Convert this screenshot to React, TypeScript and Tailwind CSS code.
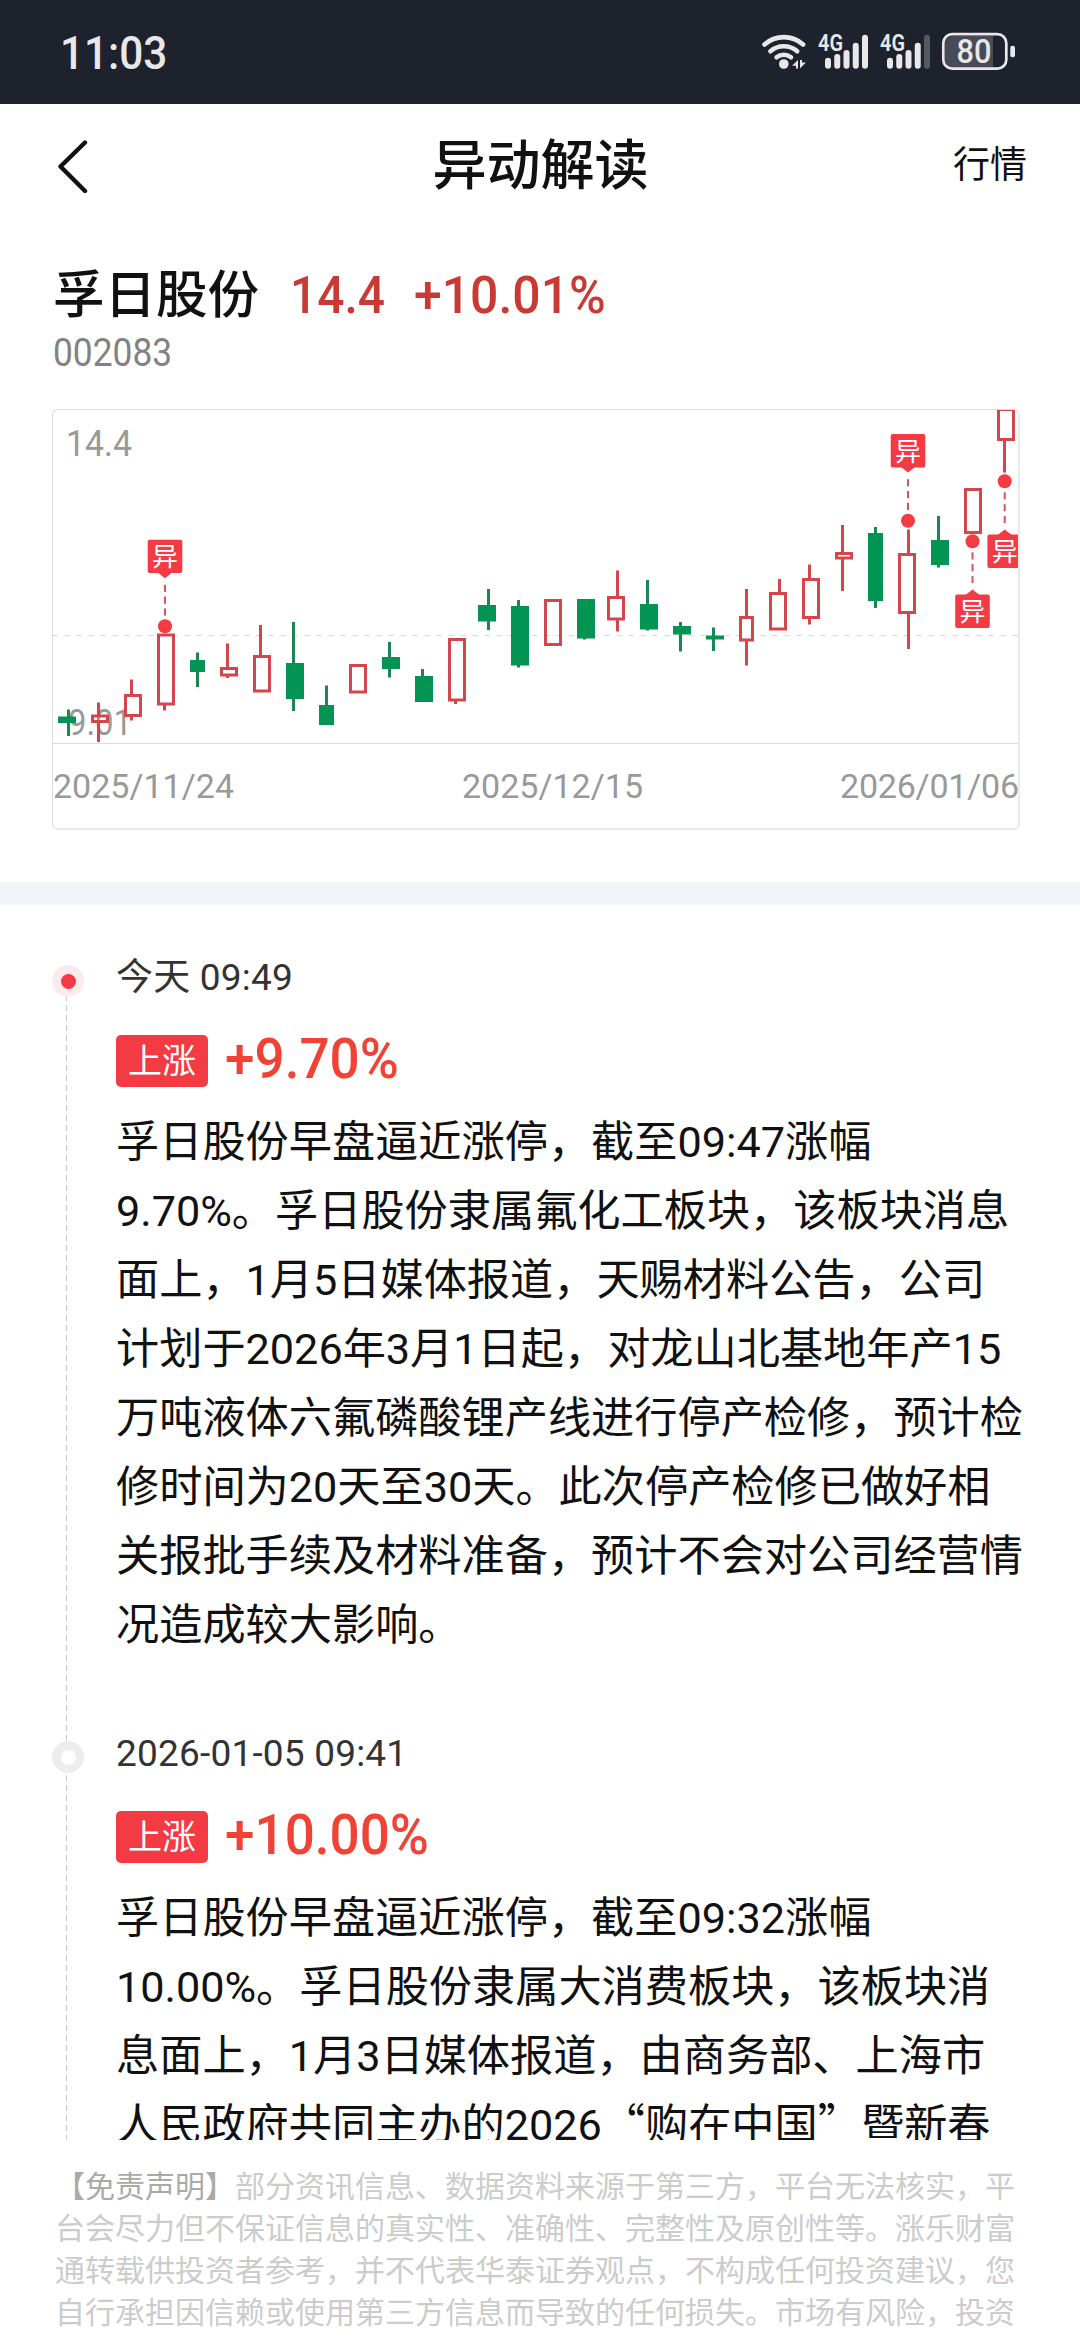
import clsx from "clsx";

type Candle = {
  up: boolean;
  x: number;
  w: number;
  top: number;
  bottom: number;
  wick?: number;
  high?: number;
  low?: number;
};

// x / w / top / bottom describe the body, wick is the left edge of the shadow line
const candles: Candle[] = [
  { up: false, x: 58, w: 18, top: 716.5, bottom: 723, wick: 67, high: 709.5, low: 736 },
  { up: true, x: 91, w: 18, top: 714.5, bottom: 723, wick: 97, high: 702.5, low: 742 },
  { up: true, x: 124, w: 18, top: 694, bottom: 717, wick: 130, high: 679.5, low: 720.5 },
  { up: true, x: 157, w: 18, top: 633.5, bottom: 705.5, wick: 163, high: 634, low: 710.5 },
  { up: false, x: 190, w: 15, top: 660, bottom: 672, wick: 196, high: 652.5, low: 687 },
  { up: true, x: 220, w: 18, top: 667, bottom: 676.5, wick: 226, high: 643.5, low: 678 },
  { up: true, x: 253, w: 18, top: 655, bottom: 692.5, wick: 259, high: 625, low: 692 },
  { up: false, x: 286, w: 18, top: 663, bottom: 699, wick: 292, high: 622, low: 711 },
  { up: false, x: 319, w: 15, top: 705, bottom: 725, wick: 325, high: 685.5, low: 725 },
  { up: true, x: 349, w: 18, top: 664, bottom: 693.5 },
  { up: false, x: 382, w: 18, top: 657, bottom: 669, wick: 388, high: 642, low: 677.5 },
  { up: false, x: 415, w: 18, top: 676, bottom: 702, wick: 421, high: 669, low: 702 },
  { up: true, x: 448, w: 18, top: 638, bottom: 701.5, wick: 454, high: 638, low: 704 },
  { up: false, x: 478, w: 18, top: 605, bottom: 621.5, wick: 487, high: 589, low: 630 },
  { up: false, x: 511, w: 18, top: 606, bottom: 665.5, wick: 517, high: 600, low: 667.5 },
  { up: true, x: 544, w: 18, top: 599, bottom: 646 },
  { up: false, x: 577, w: 18, top: 599, bottom: 638.5, wick: 583, high: 599, low: 639.5 },
  { up: true, x: 607, w: 18, top: 596, bottom: 620.5, wick: 616, high: 570.5, low: 631.5 },
  { up: false, x: 640, w: 18, top: 604, bottom: 629.5, wick: 646, high: 580, low: 630.5 },
  { up: false, x: 673, w: 18, top: 626, bottom: 634.5, wick: 679, high: 622, low: 651.5 },
  { up: false, x: 706, w: 18, top: 635.5, bottom: 639.5, wick: 712, high: 627.5, low: 651 },
  { up: true, x: 739, w: 15, top: 616, bottom: 641.5, wick: 745, high: 589, low: 665.5 },
  { up: true, x: 769, w: 18, top: 592, bottom: 630.5, wick: 778, high: 579, low: 630 },
  { up: true, x: 802, w: 18, top: 578, bottom: 619, wick: 808, high: 564.5, low: 624.5 },
  { up: true, x: 835, w: 18, top: 552, bottom: 559.5, wick: 841, high: 525, low: 591 },
  { up: false, x: 868, w: 15, top: 533, bottom: 601, wick: 874, high: 527, low: 608 },
  { up: true, x: 898, w: 18, top: 553, bottom: 614, wick: 907, high: 529.5, low: 649 },
  { up: false, x: 931, w: 18, top: 540, bottom: 565, wick: 937, high: 516, low: 567.5 },
  { up: true, x: 964, w: 18, top: 488, bottom: 534 },
  { up: true, x: 997, w: 18, top: 408, bottom: 441, wick: 1003, high: 410, low: 472.5 },
];

const markers = [
  { x: 165, y: 626.3, below: false },
  { x: 908, y: 520.7, below: false },
  { x: 972.5, y: 541.3, below: true },
  { x: 1004.7, y: 481.3, below: true },
];

const events = [
  {
    time: "今天 09:49",
    change: "+9.70%",
    latest: true,
    lines: [
      "孚日股份早盘逼近涨停，截至09:47涨幅",
      "9.70%。孚日股份隶属氟化工板块，该板块消息",
      "面上，1月5日媒体报道，天赐材料公告，公司",
      "计划于2026年3月1日起，对龙山北基地年产15",
      "万吨液体六氟磷酸锂产线进行停产检修，预计检",
      "修时间为20天至30天。此次停产检修已做好相",
      "关报批手续及材料准备，预计不会对公司经营情",
      "况造成较大影响。",
    ],
  },
  {
    time: "2026-01-05 09:41",
    change: "+10.00%",
    latest: false,
    lines: [
      "孚日股份早盘逼近涨停，截至09:32涨幅",
      "10.00%。孚日股份隶属大消费板块，该板块消",
      "息面上，1月3日媒体报道，由商务部、上海市",
      "人民政府共同主办的2026“购在中国”暨新春",
    ],
  },
];

const disclaimer = [
  "部分资讯信息、数据资料来源于第三方，平台无法核实，平",
  "台会尽力但不保证信息的真实性、准确性、完整性及原创性等。涨乐财富",
  "通转载供投资者参考，并不代表华泰证券观点，不构成任何投资建议，您",
  "自行承担因信赖或使用第三方信息而导致的任何损失。市场有风险，投资",
];

function Signal({ x, weak }: { x: number; weak?: boolean }) {
  const tops = [57.7, 54, 50, 42.7, 34.7];
  return (
    <g>
      <text x={x} y={51} fontSize={23} fontWeight={600} textLength={25} lengthAdjust="spacingAndGlyphs">
        4G
      </text>
      {tops.map((top, i) => (
        <rect
          key={top}
          x={x + 7 + i * 9.25}
          y={top}
          width={6}
          height={68.7 - top}
          rx={3}
          fill={weak && i === 4 ? "#555964" : "#e8e8ea"}
        />
      ))}
    </g>
  );
}

function StatusBar() {
  return (
    <div className="flex h-[104px] shrink-0 items-center justify-between bg-[#1e222d] pl-[60px] text-[#e8e8ea]">
      <span className="mt-0.5 origin-left scale-x-[.92] text-[46px] leading-none font-medium">11:03</span>
      <svg className="h-[104px] w-[330px]" viewBox="750 0 330 104" fill="#e8e8ea">
        <g fill="none" stroke="#e8e8ea" strokeWidth={4.6} strokeLinecap="round">
          <path d="M764.5 44.5a29 29 0 0 1 38.6 0" />
          <path d="M770.4 51.2a20.5 20.5 0 0 1 26.8 0" />
          <path d="M776.6 57.3a11.5 11.5 0 0 1 14.4 0" />
        </g>
        <circle cx={783.8} cy={64} r={4.8} />
        <path d="M792 65.8l6-5.8v8.4h-2v-2.6zM805.8 62.4l-5.800 6V60h2v2.4z" />
        <Signal x={818} />
        <Signal x={880} weak />
        <path d="M953 36h40v32h-40a8 8 0 0 1-8-8V44a8 8 0 0 1 8-8z" fill="#484b55" />
        <rect x={943.3} y={34.1} width={63} height={34.6} rx={9} fill="none" stroke="#e8e8ea" strokeWidth={2.7} />
        <rect x={1010.3} y={45.7} width={4.7} height={11.6} rx={2} />
        <text x={956.5} y={63} fontSize={33} fontWeight={500} textLength={35} lengthAdjust="spacingAndGlyphs">
          80
        </text>
      </svg>
    </div>
  );
}

function Marker({ x, y, below }: { x: number; y: number; below: boolean }) {
  const boxTop = below ? y + 53.3 : y - 86.6;
  const dash = below ? y + 11 : y - 41.5;
  return (
    <g fill="#f43a43">
      <circle cx={x} cy={y} r={7} />
      {[0, 11.8, 23.6].map((d) => (
        <rect key={d} x={x - 1} y={dash + d} width={2} height={7.2} fill="#d5545a" />
      ))}
      <rect x={x - 17.3} y={boxTop} width={34.6} height={33.4} rx={2} />
      {below ? (
        <path d={`M${x - 7} ${boxTop + 0.5}l7 -5.5l7 5.5z`} />
      ) : (
        <path d={`M${x - 7} ${boxTop + 33}l7 5.5l7 -5.5z`} />
      )}
      <text x={x} y={boxTop + 26.5} fontSize={26} textAnchor="middle" fill="#fff">
        异
      </text>
    </g>
  );
}

function Chart() {
  return (
    <div className="mt-[30px] ml-[52px] h-[421px] w-[968px] shrink-0 overflow-hidden rounded-md border-t border-r-2 border-b-2 border-l border-t-[#dcdcdc] border-r-[#ebebeb] border-b-[#ebebeb] border-l-[#dcdcdc]">
      <svg className="-mt-px -ml-px h-[421px] w-[969px] max-w-none" viewBox="52 409 969 421">
        <g fill="#999" fontSize={37}>
          <text x={66} y={456} textLength={66} lengthAdjust="spacingAndGlyphs">14.4</text>
          <text x={68} y={735} textLength={64} lengthAdjust="spacingAndGlyphs">9.01</text>
        </g>
        <line x1={52} x2={1018} y1={635.5} y2={635.5} stroke="#dcdcdc" strokeDasharray="6 6" />
        <line x1={52} x2={1021} y1={743.5} y2={743.5} stroke="#dcdcdc" />
        {candles.map((c) =>
          c.up ? (
            <g key={c.x} fill="none" stroke="#d2464c" strokeWidth={3}>
              {c.wick && <line x1={c.wick + 1.5} x2={c.wick + 1.5} y1={c.high} y2={c.top + 1} />}
              {c.wick && <line x1={c.wick + 1.5} x2={c.wick + 1.5} y1={c.bottom - 1} y2={c.low} />}
              <rect x={c.x + 1.5} y={c.top + 1.5} width={c.w - 3} height={c.bottom - c.top - 3} />
            </g>
          ) : (
            <g key={c.x}>
              {c.wick && (
                <rect x={c.wick} y={c.high} width={3} height={(c.low ?? 0) - (c.high ?? 0)} fill="#1b8555" />
              )}
              <rect x={c.x} y={c.top} width={c.w} height={c.bottom - c.top} fill="#029453" />
            </g>
          ),
        )}
        {markers.map((m) => (
          <Marker key={m.x} {...m} />
        ))}
        <g fill="#999" fontSize={34}>
          <text x={53} y={798} textLength={181}>2025/11/24</text>
          <text x={462} y={798} textLength={181}>2025/12/15</text>
          <text x={840} y={798} textLength={179}>2026/01/06</text>
        </g>
      </svg>
    </div>
  );
}

function Line({ text }: { text: string }) {
  // curly quotes need the CJK face to keep their full width
  return (
    <p className="h-[69px] whitespace-nowrap">
      {text.split(/([“”])/).map((part, i) =>
        part === "“" || part === "”" ? (
          <span key={i} className="font-['Noto_Sans_CJK_SC',sans-serif] leading-none">
            {part}
          </span>
        ) : (
          part
        ),
      )}
    </p>
  );
}

function EventItem({ event }: { event: (typeof events)[number] }) {
  return (
    <li className="relative h-[776px] pl-[116px]">
      <span
        className={clsx(
          "absolute top-[5px] left-[52px] flex size-8 items-center justify-center rounded-full",
          event.latest ? "bg-[#fdeaec]" : "bg-[#ededed]",
        )}
      >
        <span className={clsx("size-[15px] rounded-full", event.latest ? "bg-[#f43a46]" : "bg-white")} />
      </span>
      <div className="h-[75px] text-[37px] leading-[36px] tracking-[0.2px] text-[#333]">{event.time}</div>
      <div className="flex h-[52px] items-center">
        <span className="flex h-[52px] w-[92px] items-center justify-center rounded-[5px] bg-[#f43a43] text-[34px] leading-none text-white">
          上涨
        </span>
        <span className="mb-1 ml-[17px] origin-left scale-x-[.965] text-[55px] leading-[52px] font-medium text-[#f04335]">
          {event.change}
        </span>
      </div>
      <div className="mt-[21px] text-[43.2px] leading-[69px] text-[#111]">
        {event.lines.map((line) => (
          <Line key={line} text={line} />
        ))}
      </div>
    </li>
  );
}

export default function App() {
  return (
    <div
      lang="zh-CN"
      className="flex h-[2340px] w-[1080px] flex-col overflow-hidden bg-white font-[Roboto,'Noto_Sans_CJK_SC',sans-serif]"
    >
      <StatusBar />

      <header className="grid h-[122px] shrink-0 grid-cols-3 items-center pr-[53px] pl-[54px] text-[#111]">
        <svg className="h-14 w-9" viewBox="0 0 36 56" fill="none" stroke="currentColor" strokeWidth={4.4}>
          <path d="M31 5.5L6.500 29.500L31 54" strokeLinecap="round" strokeLinejoin="round" />
        </svg>
        <h1 className="pt-[3px] text-center text-[54px] leading-none font-medium whitespace-nowrap">异动解读</h1>
        <span className="pt-px text-right text-[37px] leading-none">行情</span>
      </header>

      <section className="flex h-[153px] shrink-0 flex-col px-[53px] pt-[42px]">
        <div className="flex items-center leading-[56px]">
          <span className="text-[51.5px] font-medium text-[#111]">孚日股份</span>
          <span className="ml-[31px] w-[124px] origin-left scale-x-[.92] text-[52px] font-medium text-[#c93a35]">
            14.4
          </span>
          <span className="origin-left scale-x-[.96] text-[52px] font-medium text-[#c93a35]">+10.01%</span>
        </div>
        <span className="origin-left scale-x-[.93] text-[38px] leading-[58px] text-[#828282]">002083</span>
      </section>

      <Chart />

      <div className="mt-[52px] h-[23px] shrink-0 bg-[#f3f4f9]" />

      <section className="relative h-[1235px] shrink-0 overflow-hidden pt-[55px]">
        <div className="absolute top-[90px] bottom-0 left-[66px] w-px bg-[repeating-linear-gradient(to_bottom,#c8c8c8_0_6px,transparent_6px_10px)]" />
        <ul>
          {events.map((event) => (
            <EventItem key={event.time} event={event} />
          ))}
        </ul>
      </section>

      <footer className="mt-[26px] pl-[55px] text-[30px] leading-[42px] whitespace-nowrap text-[#ccc]">
        {disclaimer.map((line, i) => (
          <p key={line}>
            {i === 0 && <span className="text-[#aaa]">【免责声明】</span>}
            {line}
          </p>
        ))}
      </footer>
    </div>
  );
}
